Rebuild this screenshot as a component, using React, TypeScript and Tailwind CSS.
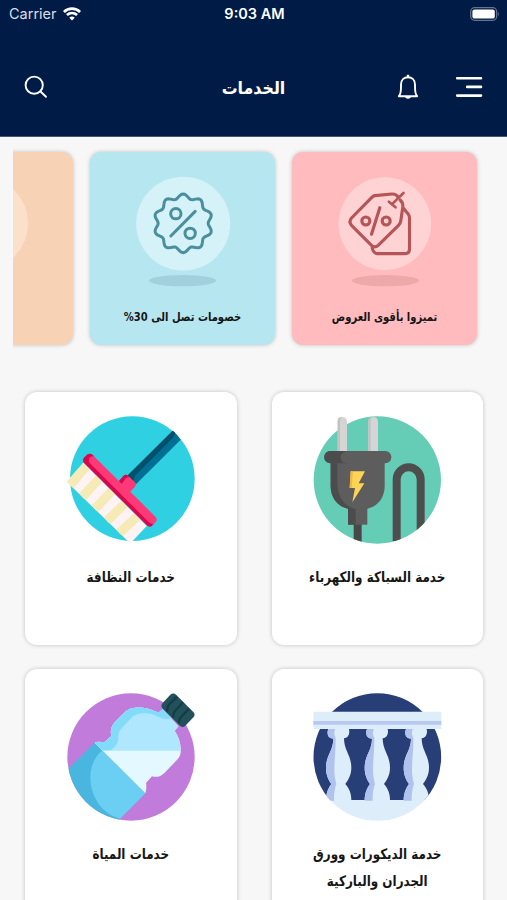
import type { ReactNode } from "react"

// wavy outline of the discount badge, 10 bumps
const badgePath =
  "M" +
  Array.from({ length: 120 }, (_, i) => {
    const a = (i / 120) * Math.PI * 2
    const r = 81.5 + 6.5 * Math.cos(a * 10)
    return `${(549 + r * Math.sin(a)).toFixed(1)} ${(250 - r * Math.cos(a)).toFixed(1)}`
  }).join("L") +
  "Z"

function StatusBar() {
  return (
    <div dir="ltr" className="grid grid-cols-3 items-center h-7 pl-[9px] pr-[7px] font-['Inter',sans-serif] text-[14.5px] text-white">
      <div className="flex items-center gap-[6px]">
        <span className="text-[#d9dfe9]">Carrier</span>
        <svg className="w-[18px] h-[14px]" viewBox="0 0 18 14" fill="none" stroke="white" strokeWidth="2.7">
          <path d="M.9 4.9C5.5.6 12.5.6 17.1 4.9" />
          <path d="M3.9 8.1C6.9 5.4 11.1 5.4 14.1 8.1" />
          <path d="M6.3 10.7 9 13.5 11.7 10.7C10.3 9.2 7.7 9.2 6.3 10.7Z" fill="white" stroke="none" />
        </svg>
      </div>
      <div className="text-center font-semibold whitespace-nowrap">9:03 AM</div>
      <svg className="justify-self-end w-[30px] h-[14px]" viewBox="0 0 30 14">
        <rect x=".7" y=".7" width="26" height="12.6" rx="4" fill="none" stroke="#65738f" strokeWidth="1.3" />
        <rect x="2.4" y="2.4" width="22.4" height="9.2" rx="2.2" fill="white" />
        <path d="M28 4.5Q29.8 7 28 9.5Z" fill="#65738f" />
      </svg>
    </div>
  )
}

function Header() {
  return (
    <header className="h-[137px] bg-[#001b45] border-b border-[#43577a]">
      <StatusBar />
      <div className="grid grid-cols-3 items-center h-[118px] pr-[24px] pl-[24px]">
        <div className="flex items-center gap-[36px]">
          <svg className="w-[28px] h-[22px]" viewBox="0 0 28 22" stroke="white" strokeWidth="2.6" strokeLinecap="round">
            <path d="M2.2 2.2H26M12.2 10.9H26M2.2 19.6H26" />
          </svg>
          <svg className="w-[22px] h-[26px]" viewBox="0 0 22 26" fill="none" stroke="white" strokeWidth="1.9" strokeLinejoin="round">
            <path d="M1.8 22.2C3.6 20.6 4 18 4 13V10.5C4 6 7 3.2 11 3.2S18 6 18 10.5V13C18 18 18.4 20.6 20.2 22.2Z" />
            <path d="M11 .8V3.2" strokeWidth="2.4" />
            <path d="M8 22.6H14C13.4 25.5 8.6 25.5 8 22.6Z" fill="white" stroke="none" />
          </svg>
        </div>
        <h1 className="mt-[2px] text-center text-[17.6px] font-bold text-white">الخدمات</h1>
        <svg className="justify-self-end w-[24px] h-[24px]" viewBox="0 0 24 24" fill="none" stroke="white" strokeWidth="1.9" strokeLinecap="round">
          <circle cx="10.2" cy="10.2" r="8.6" />
          <path d="M16.5 16.5 22 21.8" />
        </svg>
      </div>
    </header>
  )
}

function PromoCard({ color, children, title }: { color: string; children: ReactNode; title?: string }) {
  return (
    <div className={`shrink-0 flex flex-col items-center w-[185px] h-[193px] pt-5 rounded-[11px] shadow-[0_0_4px_rgba(0,0,0,0.22)] ${color}`}>
      {children}
      <p className="mt-[16px] text-[11.1px] leading-5 font-bold text-[#161616] whitespace-nowrap scale-y-112">{title}</p>
    </div>
  )
}

function TagIcon() {
  return (
    <svg className="w-[100px] h-[120px]" viewBox="164.5 96 300 360" fill="none">
      <circle cx="314" cy="251" r="139" fill="#ffd3d3" />
      <ellipse cx="316" cy="422" rx="101" ry="17" fill="#eda9aa" />
      <g stroke="#b65557" strokeWidth="9.5" strokeLinecap="round" strokeLinejoin="round">
        <path d="M354 171Q347 161 335 162L284 167Q279 168 275 172L214 234Q205 245 214 256L274 316Q284 325 294 316L355 256Q361 250 362 242L368 200Q369 188 360 180" />
        <path d="M371 206 384 222Q388 227 388 234V327Q388 341 374 341H292Q280 341 276 324" />
        <path d="M370 159 338 190M326 185 346 202" strokeWidth="8" />
        <path d="M299 203 274 283" />
        <circle cx="257" cy="243" r="12" />
        <circle cx="318" cy="243" r="12" />
      </g>
    </svg>
  )
}

function BadgeIcon() {
  return (
    <svg className="w-[100px] h-[120px]" viewBox="398.5 96 300 360" fill="none">
      <circle cx="549" cy="251" r="141" fill="#d6f2f9" />
      <ellipse cx="547" cy="422" rx="101" ry="17" fill="#a2d1dd" />
      <g stroke="#4a8f9b" strokeWidth="9" strokeLinecap="round" strokeLinejoin="round">
        <path d={badgePath} />
        <path d="M585 214 512 288" />
        <circle cx="527" cy="221" r="15.5" />
        <circle cx="570" cy="280" r="15.5" />
      </g>
    </svg>
  )
}

function PlugIcon() {
  return (
    <svg className="w-[130px] h-[130px]" viewBox="150 105 390 390">
      <clipPath id="plug-clip">
        <circle cx="346" cy="300" r="191" />
      </clipPath>
      <circle cx="346" cy="300" r="191" fill="#65cdb5" />
      <path d="M227 220V124Q227 111 240 111T255 124V220Z" fill="#d5d5d5" />
      <path d="M227 220V124Q227 111 240 111Q234 115 234 124V220Z" fill="#c1c3c3" />
      <path d="M319 220V124Q319 111 333 111T348 124V220Z" fill="#d5d5d5" />
      <path d="M319 220V124Q319 111 333 111Q326 115 326 124V220Z" fill="#c1c3c3" />
      <g clipPath="url(#plug-clip)">
        <path d="M287 420V500" stroke="#484848" strokeWidth="24" />
        <path d="M404 484V298A36 36 0 0 1 476 298V500" fill="none" stroke="#4e4e4f" strokeWidth="24" />
      </g>
      <path d="M258 375H316V434H258Z" fill="#5d5d5e" />
      <path d="M258 375H281V434H258Z" fill="#4c4c4d" />
      <path d="M206 240H368V317C368 358 340 387 303 387H271C234 387 206 358 206 317Z" fill="#5d5d5e" />
      <path d="M206 240H226V310C226 354 249 379 278 387H271C234 387 206 358 206 317Z" fill="#4c4c4d" />
      <rect x="187" y="213" width="201" height="37" rx="18" fill="#5d5d5e" />
      <path d="M205 213H257Q236 216 236 233T257 250H205A18 18 0 0 1 205 213Z" fill="#4c4c4d" />
      <path d="M266 274H309L290 310H307L271 367L279 324H263Z" fill="#ffd456" />
      <path d="M266 274H273L269 324H263Z" fill="#f3b642" />
    </svg>
  )
}

function BroomIcon() {
  return (
    <svg className="w-[130px] h-[130px]" viewBox="153 105 390 390">
      <circle cx="352" cy="296" r="187" fill="#30d0e3" />
      <path d="M473 152Q488 164 497 179L363 313 337 287Z" fill="#006f94" />
      <path d="M473 152 481 159 474 173 360 287 355 303 337 287Z" fill="#00506c" />
      {/* bristles, each stripe runs away from the head */}
      <path d="M205 248 395 438 348 488 339 484 155 305Z" fill="#fff3f4" />
      {[0, 2, 4, 6, 8].map((i) => (
        <path
          key={i}
          d={`M${205 + 19 * i} ${248 + 19 * i}l19 19L${177 + 18.5 * i} ${323 + 18 * i}l-9 -4 -12 -15Z`}
          fill="#f6eab7"
        />
      ))}
      <path d="M312 303 325 288Q332 281 340 288L359 306Q366 313 360 320L346 335 421 410Q429 418 422 426L411 437Q404 443 396 436L207 248Q201 241 207 233L218 223Q226 218 233 225Z" fill="#ff3978" />
      <path d="M207 248Q201 241 207 233L218 223Q226 218 233 225L237 229Q226 227 222 236Q220 244 225 250L400 425Q407 432 415 432L411 437Q404 443 396 436Z" fill="#dc044a" />
      <path d="M312 303 325 288Q332 281 340 288L344 292Q332 291 329 300L320 311Z" fill="#dc044a" />
    </svg>
  )
}

function BalustradeIcon() {
  const posts = [0, 116, 233]
  return (
    <svg className="w-[130px] h-[130px]" viewBox="150 96 390 390">
      <clipPath id="rail-clip">
        <circle cx="346" cy="291" r="191.5" />
      </clipPath>
      <g clipPath="url(#rail-clip)">
        <path d="M150 96H540V421H150Z" fill="#273e77" />
        <path d="M150 420H540V486H150Z" fill="#deedfa" />
        {posts.map((x) => (
          <g key={x} transform={`translate(${x} 0)`}>
            <path d="M200 205H260Q265 218 258 229Q253 235 246 235C246 272 268 286 268 323C268 346 258 360 250 372C262 386 268 400 268 422H192C192 400 198 386 208 372C200 360 192 346 192 323C192 286 214 272 214 236Q203 236 199 229Q194 218 200 205Z" fill="#deedfa" />
            <path d="M200 205H221Q213 219 220 232L221 236C221 280 217 300 217 330C217 350 221 362 223 372C218 386 216 400 216 422H192C192 400 198 386 208 372C200 360 192 346 192 323C192 286 214 272 214 236Q203 236 199 229Q194 218 200 205Z" fill="#b0c3ef" />
          </g>
        ))}
      </g>
      <path d="M154 155H538V207H154Z" fill="#deedfa" />
      <path d="M154 183H538V194H154Z" fill="#b8c8f1" />
    </svg>
  )
}

function BottleIcon() {
  return (
    <svg className="w-[130px] h-[130px]" viewBox="153 96 390 390">
      <clipPath id="bottle-clip">
        <circle cx="348" cy="291" r="191" />
      </clipPath>
      <g clipPath="url(#bottle-clip)">
        <path d="M153 96H543V486H153Z" fill="#c17cdb" />
        <path d="M239 248 391 400 291 500H140V346Z" fill="#48b6df" />
        <path d="M262 271 391 400 315 476C266 465 226 415 226 352C226 320 238 292 262 271Z" fill="#6bcff3" />
      </g>
      <path d="M239 248Q250 243 266 248L289 228Q283 205 299 187L333 153C355 137 394 141 423 155L432 157 443 148 490 199 479 213C491 230 499 251 497 278Q495 292 482 304L449 338Q432 355 411 349L393 369Q396 384 391 400Z" fill="#e3f8ff" />
      <path d="M239 248Q250 243 266 248L289 228Q283 205 299 187L333 153C355 137 394 141 423 155L432 157 443 148 490 199 479 213C492 232 497 250 496 272H262Z" fill="#aee7fe" />
      <path d="M239 248Q250 243 266 248L289 228Q283 205 299 187L333 153C355 137 394 141 423 155L432 157 443 148 470 174Q450 181 429 170C403 157 374 157 354 169L321 203Q306 220 310 237Q309 250 299 261L287 271H262Z" fill="#82dcf9" />
      <path d="M466 104Q475 97 484 105L535 156Q542 164 536 171L511 197Q502 205 493 196L442 145Q436 137 443 129Z" fill="#23515a" />
      <path d="M486 110 462 134Q455 142 457 155M504 127 481 152Q474 158 475 173M522 146 500 169Q491 177 492 190" fill="none" stroke="#143e47" strokeWidth="7" />
    </svg>
  )
}

function ServiceCard({ icon, children }: { icon: ReactNode; children: ReactNode }) {
  return (
    <div className="flex flex-col items-center h-[253px] pt-[23px] bg-white rounded-[12px] shadow-[0_0_4px_rgba(0,0,0,0.22)]">
      {icon}
      <p className="mt-[19px] text-center text-[13.3px] leading-[25px] font-bold text-[#161616] whitespace-nowrap origin-top scale-y-108">{children}</p>
    </div>
  )
}

export default function App() {
  return (
    <div dir="rtl" className="w-[507px] h-[900px] overflow-hidden bg-[#f7f7f7] font-['DejaVu_Sans_Condensed','DejaVu_Sans',sans-serif]">
      <Header />
      <div className="flex gap-[17px] ml-[13px] pr-[30px] pt-[15px] pb-[6px] overflow-hidden">
        <PromoCard color="bg-[#ffbbbe]" title="تميزوا بأقوى العروض">
          <TagIcon />
        </PromoCard>
        <PromoCard color="bg-[#b6e7f1]" title="خصومات تصل الى 30%">
          <BadgeIcon />
        </PromoCard>
        <PromoCard color="bg-[#f7d2b5]">
          <svg className="w-[100px] h-[120px]" viewBox="0 0 100 120">
            <circle cx="50" cy="51.5" r="47" fill="#fbe0cc" />
          </svg>
        </PromoCard>
      </div>
      <div className="grid grid-cols-2 gap-x-[35px] gap-y-[24px] pl-[25px] pr-[24px] pt-[41px]">
        <ServiceCard icon={<PlugIcon />}>خدمة السباكة والكهرباء</ServiceCard>
        <ServiceCard icon={<BroomIcon />}>خدمات النظافة</ServiceCard>
        <ServiceCard icon={<BalustradeIcon />}>
          خدمة الديكورات وورق
          <br />
          الجدران والباركية
        </ServiceCard>
        <ServiceCard icon={<BottleIcon />}>خدمات المياة</ServiceCard>
      </div>
    </div>
  )
}
